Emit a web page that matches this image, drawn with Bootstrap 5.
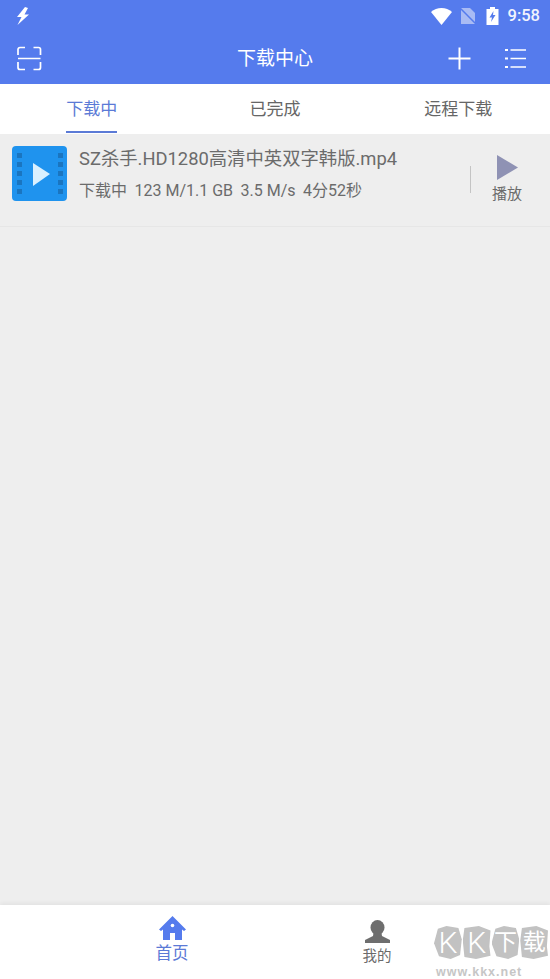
<!DOCTYPE html>
<html lang="zh">
<head>
  <meta charset="UTF-8">
  <title>下载中心</title>
  <link href="https://cdn.jsdelivr.net/npm/bootstrap@5.3.3/dist/css/bootstrap.min.css" rel="stylesheet">
  <style>
    html, body { height: 100%; }
    body { font-family: Roboto, "Noto Sans CJK SC", sans-serif; background: #eeeeee; overflow: hidden; }
    .app-shell { height: 979px; position: relative; }
    .top-area { background: #557bed; color: #fff; height: 84px; }
    .status-row { height: 32px; padding: 0 10px 0 15px; }
    .status-time { font-size: 16.500px; font-weight: 500; color: #f2f4fd; margin-left: 9px; line-height: 32px; }
    .title-row { height: 52px; padding: 0 24px 0 17px; position: relative; }
    .title-text { position: absolute; left: 0; right: 0; top: 14px; text-align: center; font-size: 19px; line-height: 26px; }
    .tab-row { height: 50px; background: #fff; }
    .tab-item { width: 183.33px; text-align: center; font-size: 17px; color: #666; line-height: 51px; position: relative; }
    .tab-item.is-on { color: #5b7ad6; }
    .tab-item.is-on::after { content: ""; position: absolute; left: 66px; width: 51px; bottom: 1px; height: 2px; background: #5b7ad6; }
    .task-row { height: 93px; border-bottom: 1px solid #e6e6e6; padding: 12px 0 0 12px; }
    .task-thumb { width: 55px; height: 55px; flex: none; }
    .task-info { margin-left: 12px; width: 391px; color: #6b6b6b; }
    .task-name { font-size: 18.350px; line-height: 24px; margin-top: 1px; margin-bottom: 9px; white-space: nowrap; }
    .task-meta { font-size: 16px; line-height: 21px; white-space: nowrap; }
    .task-meta span { margin-right: 7.500px; }
    .task-divider { width: 1px; height: 27px; background: #c4c4c4; margin-top: 20px; flex: none; }
    .task-play { width: 72px; text-align: center; color: #6b6b6b; font-size: 15px; line-height: 18px; margin-top: 9px; }
    .task-play svg { display: block; margin: 0 auto 5px 26px; }
    .bottom-bar { position: absolute; left: 0; right: 0; top: 905px; height: 74px; background: #fff; box-shadow: 0 -2px 4px rgba(0,0,0,.05); }
    .nav-slot { position: absolute; text-align: center; width: 60px; }
    .nav-home { left: 142px; top: 11px; color: #5b7ad6; font-size: 16.500px; line-height: 20px; }
    .nav-mine { left: 347px; top: 15px; color: #6b6b6b; font-size: 14.500px; line-height: 18px; }
    .nav-home svg { margin: 0 auto 4px; }
    .nav-mine svg { margin: 0 auto 5px; }
    .nav-slot svg { display: block; }
    .kk-mark { position: absolute; left: 434px; top: 926px; width: 114px; }
    .kk-blobs { display: flex; gap: 1px; }
    .kk-blob { width: 28px; height: 33px; background: #c2c2c2; color: #fff; font-size: 30px; font-weight: 300; line-height: 33px; text-align: center; }
    .kk-blob.is-cjk { font-size: 23px; font-weight: 400; }
    .kk-blob:nth-child(odd) { clip-path: polygon(14% 8%, 45% 0, 88% 6%, 100% 40%, 94% 88%, 60% 100%, 18% 92%, 0 52%); }
    .kk-blob:nth-child(even) { clip-path: polygon(6% 6%, 58% 0, 100% 14%, 96% 62%, 100% 90%, 48% 100%, 6% 94%, 0 44%); }
    .kk-url { font-family: "Liberation Sans", sans-serif; font-weight: 700; font-size: 12.500px; line-height: 11px; letter-spacing: 1px; color: #c6c6c6; margin: 8px 0 0 2px; white-space: nowrap; }
  </style>
</head>
<body>
  <div class="app-shell">
    <div class="top-area">
      <div class="status-row d-flex align-items-center">
        <svg width="15" height="18" viewBox="0 0 15 18" fill="#fff"><path d="M10 0 2 10h4.500L2.500 18 14 7.500H9.500L13 1Z"/></svg>
        <div class="ms-auto d-flex align-items-center">
          <svg width="21" height="17" viewBox="0 0 21 17" fill="#fff"><path d="M10.500 17 0 4C3 1.500 6.500 0 10.500 0S18 1.500 21 4Z"/></svg>
          <svg style="margin-left:8px" width="16" height="16" viewBox="0 0 16 16"><path d="M1 0H10L15 5V16H1Z" fill="#a9bbf4"/><path d="M0 0 16 16" stroke="#557bed" stroke-width="1.500"/></svg>
          <svg style="margin-left:10px" width="13" height="18" viewBox="0 0 13 18"><path d="M4 0H9V2H12.500V18H.5V2H4Z" fill="#fff"/><path d="M7.500 4 3.500 10.500H6L5 15 9.500 8H7Z" fill="#557bed"/></svg>
          <span class="status-time">9:58</span>
        </div>
      </div>
      <div class="title-row d-flex align-items-center">
        <svg width="25" height="25" viewBox="0 0 25 25" fill="none" stroke="#fff" stroke-width="1.700"><path d="M8 1.500H3A2 2 0 0 0 1 3.500V9M16.500 1.500H21.500A2 2 0 0 1 23.500 3.500V9M8 23.500H3A2 2 0 0 1 1 21.500V16M16.500 23.500H21.500A2 2 0 0 0 23.500 21.500V16M1 12.500H23.500"/></svg>
        <div class="title-text">下载中心</div>
        <svg class="ms-auto" width="23" height="23" viewBox="0 0 23 23" stroke="#fff" stroke-width="2" fill="none"><path d="M11.500 .5V22.500M.5 11.500H22.500"/></svg>
        <svg style="margin-left:34px" width="21" height="21" viewBox="0 0 21 21" fill="none" stroke="#fff" stroke-width="1.600"><path d="M5.500 2H21M5.500 10.500H21M5.500 19H21"/><path d="M0 2H3M0 10.500H3M0 19H3" stroke-width="2.200"/></svg>
      </div>
    </div>

    <div class="tab-row d-flex">
      <div class="tab-item is-on">下载中</div>
      <div class="tab-item">已完成</div>
      <div class="tab-item">远程下载</div>
    </div>

    <div class="task-row d-flex">
      <svg class="task-thumb" viewBox="0 0 55 55">
        <rect width="55" height="55" rx="4" fill="#1f93ee"/>
        <g fill="#1a75c0">
          <rect x="5" y="7" width="5" height="5"/><rect x="5" y="16" width="5" height="5"/><rect x="5" y="25" width="5" height="5"/><rect x="5" y="34" width="5" height="5"/><rect x="5" y="43" width="5" height="5"/>
          <rect x="46" y="7" width="5" height="5"/><rect x="46" y="16" width="5" height="5"/><rect x="46" y="25" width="5" height="5"/><rect x="46" y="34" width="5" height="5"/><rect x="46" y="43" width="5" height="5"/>
        </g>
        <path d="M21 17 38 28 21 40Z" fill="#d9f0ff"/>
      </svg>
      <div class="task-info">
        <div class="task-name">SZ杀手.HD1280高清中英双字韩版.mp4</div>
        <div class="task-meta"><span>下载中</span><span>123 M/1.1 GB</span><span>3.5 M/s</span><span>4分52秒</span></div>
      </div>
      <div class="task-divider"></div>
      <div class="task-play">
        <svg width="22" height="25" viewBox="0 0 22 25"><path d="M0 0 21 12.500 0 25Z" fill="#8f92b4"/></svg>
        播放
      </div>
    </div>

    <div class="bottom-bar">
      <div class="nav-slot nav-home">
        <svg width="27" height="24" viewBox="0 0 27 24"><path d="M13.500 0 27 13.500 25 15 23 13.500V24H16V17H11V24H4V13.500L2 15 0 13.500Z" fill="#557bed"/><circle cx="13.500" cy="9.500" r="1.800" fill="#fff"/></svg>
        首页
      </div>
      <div class="nav-slot nav-mine">
        <svg width="25" height="23" viewBox="0 0 25 23" fill="#6e6e6e"><ellipse cx="12.500" cy="7.500" rx="7" ry="7.500"/><path d="M8.500 13H16.500L17 16 25 20V23H0V20L8 16Z"/></svg>
        我的
      </div>
    </div>

    <div class="kk-mark">
      <div class="kk-blobs">
        <div class="kk-blob">K</div><div class="kk-blob">K</div><div class="kk-blob is-cjk">下</div><div class="kk-blob is-cjk">载</div>
      </div>
      <div class="kk-url">www.kkx.net</div>
    </div>
  </div>
</body>
</html>
